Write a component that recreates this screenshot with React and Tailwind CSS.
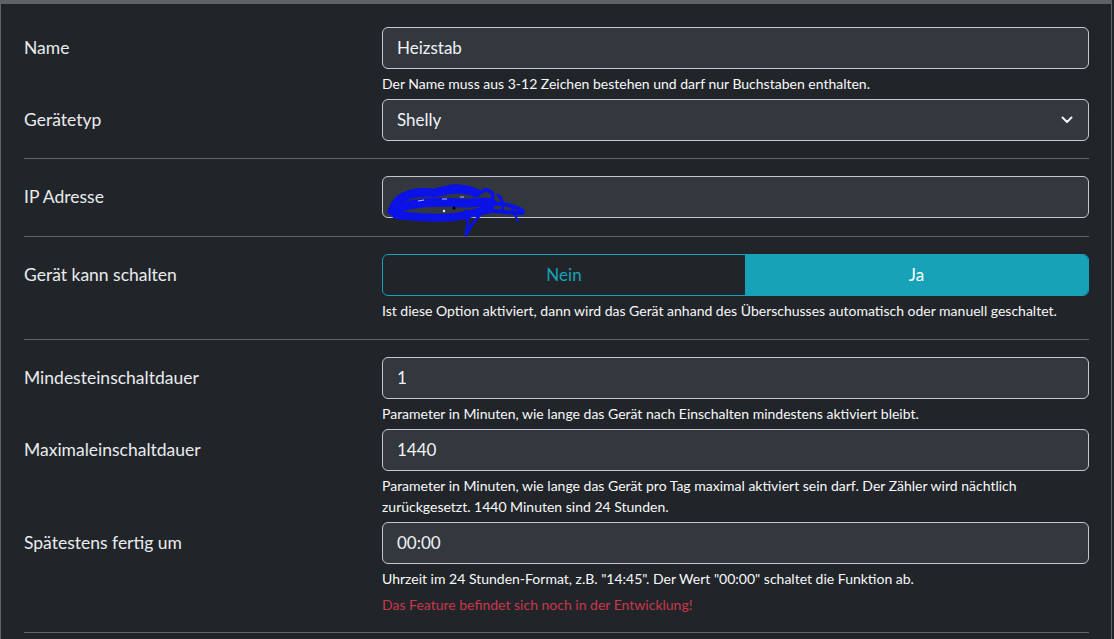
import React from "react";

const font = { fontFamily: "Lato, 'Noto Sans', sans-serif" };

function Label({ children }) {
  return (
    <div className="w-[358px] shrink-0 h-[42px] flex items-center text-[17.5px] text-[#e9ecef]">
      {children}
    </div>
  );
}

function Input({ value, children }) {
  return (
    <div className="h-[42px] rounded-[6px] border border-[#c4c8cc] bg-[#33373e] flex items-center pl-[14px] pr-[14px] text-[17px] text-[#f1f3f5]">
      <span className="flex-1">{value}</span>
      {children}
    </div>
  );
}

function Hint({ children, className = "" }) {
  return (
    <div className={"text-[14px] leading-[21px] text-[#f8f9fa] " + className}>{children}</div>
  );
}

function Hr({ className = "" }) {
  return <div className={"h-px bg-[#62666b] " + className} />;
}

export default function App() {
  return (
    <div className="w-[1114px] h-[639px] bg-[#212529] overflow-hidden" style={font}>
      <div className="w-[1112px] h-[639px] border-t-4 border-l border-r border-[#5f6368] pl-[23px] pr-[22px] pt-[23px]">
        {/* Name */}
        <div className="flex">
          <Label>Name</Label>
          <div className="flex-1">
            <Input value="Heizstab" />
            <Hint className="mt-[4px]">
              Der Name muss aus 3-12 Zeichen bestehen und darf nur Buchstaben enthalten.
            </Hint>
          </div>
        </div>
        {/* Gerätetyp */}
        <div className="flex mt-[5px]">
          <Label>Gerätetyp</Label>
          <div className="flex-1">
            <Input value="Shelly">
              <svg width="12" height="8" viewBox="0 0 12 8" fill="none" className="mr-[1px]">
                <path d="M1.5 1.5 L6 6 L10.5 1.5" stroke="#f1f3f5" strokeWidth="2" strokeLinecap="round" strokeLinejoin="round" />
              </svg>
            </Input>
          </div>
        </div>
        <Hr className="mt-[17px]" />
        {/* IP */}
        <div className="flex mt-[17px]">
          <Label>IP Adresse</Label>
          <div className="flex-1 relative">
            <Input value="" />
            <svg className="absolute left-[2px] top-[5px]" width="150" height="56" viewBox="0 0 150 56" fill="none">
              <g stroke="#0b12e8" strokeLinecap="round" strokeLinejoin="round" fill="none">
                <path d="M10 26 C16 14 30 10 50 12 C66 8 80 6 92 12" strokeWidth="9" />
                <path d="M8 30 C24 22 50 20 78 22 C92 22 100 20 108 22" strokeWidth="9" />
                <path d="M12 34 C30 36 50 38 70 36 C86 34 96 30 106 28" strokeWidth="8" />
                <path d="M60 8 C70 4 80 6 86 10" strokeWidth="5" />
                <path d="M96 12 C100 8 104 8 108 12 C110 16 108 20 104 22" strokeWidth="4" />
                <path d="M100 24 C112 22 122 22 130 26 C138 28 142 32 136 32 C126 32 116 30 108 30" strokeWidth="4" />
                <path d="M114 14 C118 18 120 24 118 30" strokeWidth="3" />
                <path d="M82 30 C84 38 84 46 82 54 C86 46 90 40 96 34" strokeWidth="3" />
                <path d="M128 28 L134 40" strokeWidth="2" />
              </g>
              <path d="M34 20 L40 19 M58 18 L63 18 M76 16 L80 16" stroke="#b8bcff" strokeWidth="1" />
              <circle cx="70" cy="27" r="1.6" fill="#000" />
              <circle cx="60" cy="30" r="1.2" fill="#e8e8ff" />
            </svg>
          </div>
        </div>
        <Hr className="mt-[18px]" />
        {/* Gerät kann schalten */}
        <div className="flex mt-[17px]">
          <Label>Gerät kann schalten</Label>
          <div className="flex-1">
            <div className="h-[42px] flex rounded-[6px] border border-[#17a2b8] overflow-hidden text-[17px]">
              <div className="w-[362px] flex items-center justify-center text-[#17a2b8]">Nein</div>
              <div className="flex-1 flex items-center justify-center bg-[#17a2b8] text-white">Ja</div>
            </div>
            <Hint className="mt-[4px]">
              Ist diese Option aktiviert, dann wird das Gerät anhand des Überschusses automatisch oder manuell geschaltet.
            </Hint>
          </div>
        </div>
        <Hr className="mt-[18px]" />
        {/* Mindest */}
        <div className="flex mt-[17px]">
          <Label>Mindesteinschaltdauer</Label>
          <div className="flex-1">
            <Input value="1" />
            <Hint className="mt-[4px]">
              Parameter in Minuten, wie lange das Gerät nach Einschalten mindestens aktiviert bleibt.
            </Hint>
          </div>
        </div>
        {/* Maximal */}
        <div className="flex mt-[5px]">
          <Label>Maximaleinschaltdauer</Label>
          <div className="flex-1">
            <Input value="1440" />
            <Hint className="mt-[4px] pr-[40px]">
              Parameter in Minuten, wie lange das Gerät pro Tag maximal aktiviert sein darf. Der Zähler wird nächtlich
              zurückgesetzt. 1440 Minuten sind 24 Stunden.
            </Hint>
          </div>
        </div>
        {/* Spätestens */}
        <div className="flex mt-[5px]">
          <Label>Spätestens fertig um</Label>
          <div className="flex-1">
            <Input value="00:00" />
            <Hint className="mt-[4px]">
              Uhrzeit im 24 Stunden-Format, z.B. "14:45". Der Wert "00:00" schaltet die Funktion ab.
            </Hint>
            <div className="mt-[5px] text-[14px] leading-[21px] text-[#c8384b]">
              Das Feature befindet sich noch in der Entwicklung!
            </div>
          </div>
        </div>
        <Hr className="mt-[17px]" />
      </div>
    </div>
  );
}
